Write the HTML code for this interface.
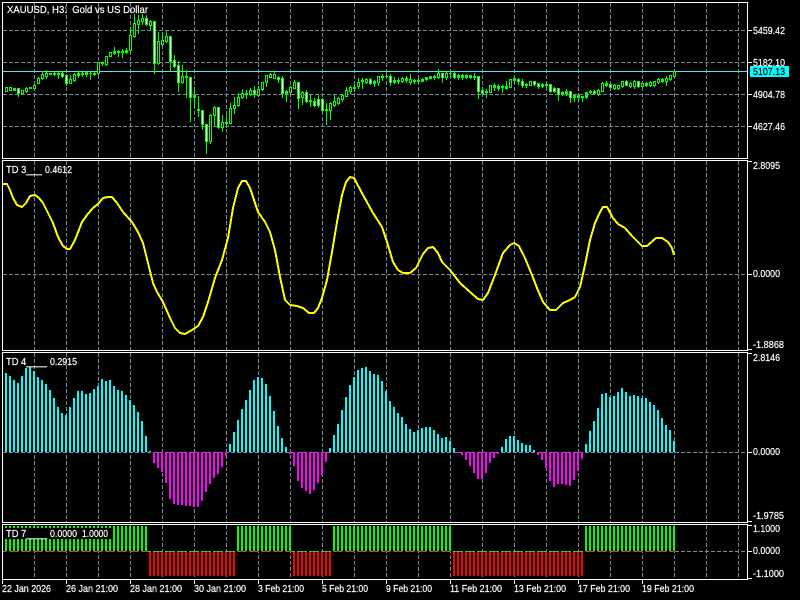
<!DOCTYPE html>
<html><head><meta charset="utf-8"><title>XAUUSD, H3</title>
<style>
html,body{margin:0;padding:0;background:#000;width:800px;height:600px;overflow:hidden}
svg{display:block}
text{font-family:"Liberation Sans",sans-serif;font-size:10.5px;fill:#fff;stroke:#fff;stroke-width:.2px;white-space:pre}
</style></head><body>
<svg width="800" height="600" viewBox="0 0 800 600" shape-rendering="crispEdges" fill="none">
<rect width="800" height="600" fill="#000"/>
<!-- grid -->
<g stroke="#778899" stroke-dasharray="4 2">
<path d="M34.5 3V158M66.5 3V158M98.5 3V158M130.5 3V158M162.5 3V158M194.5 3V158M226.5 3V158M258.5 3V158M290.5 3V158M322.5 3V158M354.5 3V158M386.5 3V158M418.5 3V158M450.5 3V158M482.5 3V158M514.5 3V158M546.5 3V158M578.5 3V158M610.5 3V158M642.5 3V158M674.5 3V158M706.5 3V158M738.5 3V158"/>
<path d="M34.5 161V350M66.5 161V350M98.5 161V350M130.5 161V350M162.5 161V350M194.5 161V350M226.5 161V350M258.5 161V350M290.5 161V350M322.5 161V350M354.5 161V350M386.5 161V350M418.5 161V350M450.5 161V350M482.5 161V350M514.5 161V350M546.5 161V350M578.5 161V350M610.5 161V350M642.5 161V350M674.5 161V350M706.5 161V350M738.5 161V350"/>
<path d="M34.5 353V522M66.5 353V522M98.5 353V522M130.5 353V522M162.5 353V522M194.5 353V522M226.5 353V522M258.5 353V522M290.5 353V522M322.5 353V522M354.5 353V522M386.5 353V522M418.5 353V522M450.5 353V522M482.5 353V522M514.5 353V522M546.5 353V522M578.5 353V522M610.5 353V522M642.5 353V522M674.5 353V522M706.5 353V522M738.5 353V522"/>
<path d="M34.5 525V579M66.5 525V579M98.5 525V579M130.5 525V579M162.5 525V579M194.5 525V579M226.5 525V579M258.5 525V579M290.5 525V579M322.5 525V579M354.5 525V579M386.5 525V579M418.5 525V579M450.5 525V579M482.5 525V579M514.5 525V579M546.5 525V579M578.5 525V579M610.5 525V579M642.5 525V579M674.5 525V579M706.5 525V579M738.5 525V579"/>
<path d="M3 30.5H747M3 62.5H747M3 94.5H747M3 126.5H747M3 274.5H747M3 452.5H747M3 551.5H747"/>
</g>
<!-- price line -->
<path d="M3 71.5H747" stroke="#55e8e8"/>
<!-- candles wicks -->
<path stroke="#00ff00" d="M2.5 90V95M6.5 87V92M10.5 87V91M14.5 88V91M18.5 88V97M22.5 90V94M26.5 87V93M30.5 87V89M34.5 84V89M38.5 77V84M42.5 71V80M46.5 70V79M50.5 73V75M54.5 72V76M58.5 72V79M62.5 71V78M66.5 74V86M70.5 75V84M74.5 73V82M78.5 71V78M82.5 71V77M86.5 71V77M90.5 71V80M94.5 72V76M98.5 62V75M102.5 62V66M106.5 56V66M110.5 52V57M114.5 47V55M118.5 50V57M122.5 49V58M126.5 48V54M130.5 27V53M134.5 14V38M138.5 15V34M142.5 14V25M146.5 15V26M150.5 20V30M154.5 21V74M158.5 32V65M162.5 32V46M166.5 31V43M170.5 36V72M174.5 55V68M178.5 61V92M182.5 65V84M186.5 70V98M190.5 77V122M194.5 87V108M198.5 96V117M202.5 110V130M206.5 124V154M210.5 114V144M214.5 106V126M218.5 107V129M222.5 115V132M226.5 115V128M230.5 103V124M234.5 97V114M238.5 93V107M242.5 89V99M246.5 90V99M250.5 88V96M254.5 86V98M258.5 86V97M262.5 82V91M266.5 75V87M270.5 73V78M274.5 72V79M278.5 76V83M282.5 76V98M286.5 90V102M290.5 86V94M294.5 80V89M298.5 82V109M302.5 91V105M306.5 90V103M310.5 95V107M314.5 98V107M318.5 94V108M322.5 98V112M326.5 103V125M330.5 102V120M334.5 94V107M338.5 97V105M342.5 94V102M346.5 87V97M350.5 86V94M354.5 85V92M358.5 78V89M362.5 78V89M366.5 78V84M370.5 78V85M374.5 80V87M378.5 76V86M382.5 74V81M386.5 73V79M390.5 74V86M394.5 77V84M398.5 78V84M402.5 77V83M406.5 76V83M410.5 74V85M414.5 79V84M418.5 78V83M422.5 78V82M426.5 77V81M430.5 76V79M434.5 75V80M438.5 69V79M442.5 73V83M446.5 72V80M450.5 71V78M454.5 71V79M458.5 74V80M462.5 74V80M466.5 74V79M470.5 75V79M474.5 73V80M478.5 76V99M482.5 87V94M486.5 89V98M490.5 85V93M494.5 83V91M498.5 84V91M502.5 85V93M506.5 81V90M510.5 79V88M514.5 78V83M518.5 78V85M522.5 79V88M526.5 83V88M530.5 81V86M534.5 81V86M538.5 83V89M542.5 83V88M546.5 82V87M550.5 84V93M554.5 87V93M558.5 88V101M562.5 91V96M566.5 89V96M570.5 91V103M574.5 95V102M578.5 94V101M582.5 96V102M586.5 92V99M590.5 90V94M594.5 90V95M598.5 89V96M602.5 82V92M606.5 81V87M610.5 83V89M614.5 84V90M618.5 85V90M622.5 81V88M626.5 80V86M630.5 82V88M634.5 80V89M638.5 81V88M642.5 83V88M646.5 82V87M650.5 81V87M654.5 81V87M658.5 78V84M662.5 78V83M666.5 76V86M670.5 75V81M674.5 71V77"/>
<!-- candle bodies -->
<path stroke="#00ff00" stroke-width="3" d="M6.5 87V92M10.5 87V91M14.5 88V91M18.5 88V94M22.5 90V94M26.5 88V92M30.5 87V89M34.5 85V89M38.5 78V84M42.5 74V79M46.5 73V77M50.5 73V75M54.5 73V75M58.5 73V75M62.5 73V77M66.5 75V84M70.5 79V84M74.5 74V81M78.5 73V76M82.5 73V75M86.5 72V75M90.5 73V74M94.5 73V75M98.5 62V74M102.5 62V64M106.5 56V65M110.5 52V57M114.5 51V54M118.5 51V53M122.5 51V53M126.5 50V53M130.5 35V51M134.5 23V37M138.5 20V25M142.5 18V22M146.5 18V25M150.5 21V26M154.5 21V64M158.5 41V64M162.5 40V45M166.5 36V42M170.5 36V62M174.5 60V67M178.5 65V83M182.5 76V83M186.5 76V78M190.5 77V98M194.5 95V98M198.5 109V111M202.5 110V125M206.5 124V142M210.5 115V142M214.5 107V116M218.5 107V128M222.5 122V128M226.5 122V124M230.5 108V124M234.5 105V109M238.5 97V106M242.5 93V98M246.5 93V95M250.5 90V95M254.5 90V95M258.5 89V96M262.5 82V90M266.5 75V83M270.5 74V78M274.5 74V79M278.5 77V80M282.5 78V94M286.5 91V94M290.5 87V93M294.5 82V89M298.5 82V99M302.5 92V98M306.5 92V102M310.5 100V102M314.5 101V106M318.5 99V106M322.5 99V111M326.5 109V111M330.5 103V111M334.5 101V106M338.5 98V104M342.5 95V100M346.5 90V97M350.5 87V92M354.5 87V89M358.5 82V87M362.5 80V82M366.5 79V83M370.5 79V84M374.5 81V84M378.5 76V83M382.5 76V78M386.5 76V77M390.5 76V83M394.5 80V83M398.5 80V82M402.5 78V82M406.5 78V81M410.5 79V83M414.5 80V82M418.5 80V82M422.5 79V82M426.5 77V80M430.5 76V79M434.5 76V78M438.5 73V78M442.5 73V78M446.5 73V78M450.5 73V74M454.5 73V78M458.5 75V78M462.5 75V78M466.5 75V78M470.5 75V78M474.5 76V78M478.5 76V92M482.5 90V94M486.5 91V93M490.5 85V93M494.5 85V88M498.5 86V89M502.5 86V88M506.5 86V89M510.5 79V88M514.5 78V81M518.5 79V82M522.5 81V86M526.5 84V86M530.5 81V86M534.5 81V85M538.5 83V87M542.5 84V87M546.5 84V86M550.5 84V92M554.5 88V92M558.5 88V95M562.5 92V95M566.5 91V94M570.5 91V98M574.5 95V98M578.5 95V98M582.5 96V98M586.5 92V98M590.5 91V93M594.5 91V94M598.5 90V95M602.5 83V92M606.5 83V86M610.5 84V88M614.5 85V89M618.5 85V89M622.5 81V87M626.5 81V86M630.5 83V87M634.5 81V87M638.5 81V87M642.5 83V87M646.5 83V86M650.5 82V86M654.5 81V86M658.5 79V83M662.5 79V82M666.5 78V82M670.5 75V80M674.5 71V77"/>
<!-- bearish interiors -->
<path stroke="#ffffff" d="M18.5 89V93M62.5 74V76M66.5 76V83M146.5 19V24M154.5 22V63M170.5 37V61M174.5 61V66M178.5 66V82M190.5 78V97M202.5 111V124M206.5 125V141M218.5 108V127M254.5 91V94M278.5 78V79M282.5 79V93M298.5 83V98M306.5 93V101M314.5 102V105M318.5 100V105M322.5 100V110M370.5 80V83M390.5 77V82M442.5 74V77M454.5 74V77M478.5 77V91M482.5 91V93M518.5 80V81M522.5 82V85M534.5 82V84M538.5 84V86M550.5 85V91M554.5 89V91M558.5 89V94M570.5 92V97M594.5 92V93M610.5 85V87M626.5 82V85M638.5 82V86"/>
<!-- bullish interiors -->
<path stroke="#000000" d="M6.5 88V91M10.5 88V90M22.5 91V93M26.5 89V91M34.5 86V88M38.5 79V83M42.5 75V78M46.5 74V76M70.5 80V83M74.5 75V80M98.5 63V73M106.5 57V64M110.5 53V56M130.5 36V50M134.5 24V36M138.5 21V24M142.5 19V21M150.5 22V25M158.5 42V63M162.5 41V44M166.5 37V41M182.5 77V82M210.5 116V141M214.5 108V115M222.5 123V127M230.5 109V123M234.5 106V108M238.5 98V105M242.5 94V97M250.5 91V94M258.5 90V95M262.5 83V89M266.5 76V82M270.5 75V77M274.5 75V78M290.5 88V92M294.5 83V88M302.5 93V97M330.5 104V110M334.5 102V105M338.5 99V103M342.5 96V99M346.5 91V96M350.5 88V91M358.5 83V86M366.5 80V82M378.5 77V82M402.5 79V81M410.5 80V82M438.5 74V77M446.5 74V77M490.5 86V92M510.5 80V87M530.5 82V85M598.5 91V94M602.5 84V91M614.5 86V88M618.5 86V88M622.5 82V86M630.5 84V86M634.5 82V86M642.5 84V86M650.5 83V85M654.5 82V85M658.5 80V82M666.5 79V81M670.5 76V79M674.5 72V76"/>
<!-- yellow line -->
<path stroke="#ffff00" stroke-width="2" stroke-linejoin="round" d="M3 184L7 184L10 190L13 198L17 205L22 207L26 203L30 196L35 195L39 198L43 203L48 213L53 223L58 237L63 246L67 249L70 249L75 240L82 222L87 215L93 208L98 204L103 198L108 197L112 197L117 203L123 212L132 222L138 232L143 243L148 263L153 283L157 292L163 302L170 318L175 328L180 333L185 334L192 330L198 326L203 317L208 302L215 278L222 260L228 238L233 208L238 188L242 181L246 181L250 188L258 212L265 222L270 232L275 250L280 277L285 300L290 305L297 306L303 308L309 313L314 313L318 308L322 298L327 280L332 252L337 222L342 195L346 182L350 177L354 178L363 195L373 213L382 227L387 242L393 262L398 270L403 273L410 273L416 268L423 254L428 248L433 247L438 253L442 262L450 270L460 283L470 292L478 299L483 300L488 293L495 275L503 253L510 245L514 243L519 246L525 258L532 275L537 288L543 302L550 310L556 310L563 303L570 300L575 297L580 287L585 265L590 240L595 223L600 212L603 207L607 207L613 218L618 224L625 228L632 236L642 246L647 246L656 238L662 238L668 242L672 248L674 255"/>
<!-- TD4 histogram -->
<path stroke="#00ffff" stroke-width="2" d="M6 452V373M10 452V376M14 452V380M18 452V383M22 452V376M26 452V368M30 452V367M34 452V371M38 452V377M42 452V380M46 452V384M50 452V390M54 452V398M58 452V407M62 452V413M66 452V415M70 452V407M74 452V398M78 452V391M82 452V391M86 452V394M90 452V393M94 452V389M98 452V386M102 452V379M106 452V381M110 452V380M114 452V386M118 452V390M122 452V391M126 452V395M130 452V400M134 452V405M138 452V412M142 452V421M146 452V436M150 452V451M230 452V444M234 452V432M238 452V420M242 452V409M246 452V400M250 452V390M254 452V380M258 452V377M262 452V378M266 452V384M270 452V396M274 452V411M278 452V426M282 452V438M286 452V447M330 452V448M334 452V435M338 452V424M342 452V410M346 452V397M350 452V385M354 452V377M358 452V370M362 452V368M366 452V367M370 452V371M374 452V374M378 452V375M382 452V381M386 452V391M390 452V401M394 452V407M398 452V413M402 452V417M406 452V424M410 452V429M414 452V432M418 452V430M422 452V428M426 452V427M430 452V427M434 452V430M438 452V434M442 452V438M446 452V437M450 452V441M454 452V448M502 452V447M506 452V439M510 452V436M514 452V436M518 452V440M522 452V443M526 452V445M530 452V445M534 452V450M586 452V444M590 452V431M594 452V421M598 452V408M602 452V394M606 452V393M610 452V397M614 452V396M618 452V392M622 452V388M626 452V392M630 452V396M634 452V395M638 452V396M642 452V398M646 452V398M650 452V402M654 452V405M658 452V410M662 452V418M666 452V425M670 452V430M674 452V441"/>
<path stroke="#ff00ff" stroke-width="2" d="M154 452V463M158 452V468M162 452V472M166 452V483M170 452V499M174 452V504M178 452V505M182 452V505M186 452V506M190 452V506M194 452V507M198 452V507M202 452V501M206 452V492M210 452V484M214 452V478M218 452V474M222 452V467M226 452V456M290 452V454M294 452V466M298 452V481M302 452V488M306 452V491M310 452V494M314 452V490M318 452V483M322 452V475M326 452V462M458 452V453M462 452V455M466 452V460M470 452V466M474 452V473M478 452V479M482 452V479M486 452V473M490 452V463M494 452V458M498 452V454M538 452V455M542 452V460M546 452V468M550 452V481M554 452V487M558 452V484M562 452V484M566 452V485M570 452V486M574 452V480M578 452V471M582 452V459"/>
<!-- TD7 bars -->
<g stroke-dasharray="2 2">
<path stroke="#00ff00" stroke-width="25" d="M5 538.5H147M237 538.5H291M333 538.5H451M585 538.5H675"/>
<path stroke="#ff0000" d="M5 551.5H147M237 551.5H291M333 551.5H451M585 551.5H675"/>
<path stroke="#ff0000" stroke-width="24" d="M149 564H235M293 564H331M453 564H583"/>
<path stroke="#00ff00" d="M149 551.5H235M293 551.5H331M453 551.5H583"/>
</g>
<rect x="5" y="528" width="107" height="11" fill="#000"/>
<!-- frames -->
<g stroke="#fff">
<rect x="2.5" y="2.5" width="745" height="156"/>
<rect x="2.5" y="160.5" width="745" height="190"/>
<rect x="2.5" y="352.5" width="745" height="170"/>
<rect x="2.5" y="524.5" width="745" height="55"/>
<path d="M748 30.5H752M748 62.5H752M748 94.5H752M748 126.5H752M748 161.5H752M748 274.5H752M748 349.5H752M748 353.5H752M748 452.5H752M748 521.5H752M748 525.5H752M748 551.5H752M748 578.5H752"/>
<path d="M2.5 580V584M66.5 580V584M130.5 580V584M194.5 580V584M258.5 580V584M322.5 580V584M386.5 580V584M450.5 580V584M514.5 580V584M578.5 580V584M642.5 580V584"/>
</g>
<rect x="750" y="66" width="39" height="11" fill="#00ffff"/>
<!-- labels -->
<g shape-rendering="auto">
<text x="7" y="13" textLength="141" lengthAdjust="spacingAndGlyphs">XAUUSD, H3:  Gold vs US Dollar</text>
<text x="753" y="34" textLength="32" lengthAdjust="spacingAndGlyphs">5459.42</text>
<text x="753" y="66" textLength="32" lengthAdjust="spacingAndGlyphs">5182.10</text>
<text x="753" y="75" textLength="32" lengthAdjust="spacingAndGlyphs" style="fill:#000;stroke:#000">5107.13</text>
<text x="753" y="98" textLength="32" lengthAdjust="spacingAndGlyphs">4904.78</text>
<text x="753" y="130" textLength="32" lengthAdjust="spacingAndGlyphs">4627.46</text>
<text x="6" y="173" textLength="36" lengthAdjust="spacingAndGlyphs">TD 3___</text>
<text x="45" y="173" textLength="27" lengthAdjust="spacingAndGlyphs">0.4612</text>
<text x="753" y="169" textLength="27" lengthAdjust="spacingAndGlyphs">2.8095</text>
<text x="753" y="277" textLength="27" lengthAdjust="spacingAndGlyphs">0.0000</text>
<text x="753" y="348" textLength="31" lengthAdjust="spacingAndGlyphs">-1.8868</text>
<text x="6" y="365" textLength="41" lengthAdjust="spacingAndGlyphs">TD 4____</text>
<text x="50" y="365" textLength="27" lengthAdjust="spacingAndGlyphs">0.2915</text>
<text x="753" y="361" textLength="27" lengthAdjust="spacingAndGlyphs">2.8146</text>
<text x="753" y="455" textLength="27" lengthAdjust="spacingAndGlyphs">0.0000</text>
<text x="753" y="519" textLength="31" lengthAdjust="spacingAndGlyphs">-1.9785</text>
<text x="6" y="537" textLength="41" lengthAdjust="spacingAndGlyphs">TD 7____</text>
<text x="50" y="537" textLength="27" lengthAdjust="spacingAndGlyphs">0.0000</text>
<text x="82" y="537" textLength="26" lengthAdjust="spacingAndGlyphs">1.0000</text>
<text x="753" y="532" textLength="27" lengthAdjust="spacingAndGlyphs">1.1000</text>
<text x="753" y="554" textLength="27" lengthAdjust="spacingAndGlyphs">0.0000</text>
<text x="753" y="577" textLength="31" lengthAdjust="spacingAndGlyphs">-1.1000</text>
<text x="2" y="592" textLength="49" lengthAdjust="spacingAndGlyphs">22 Jan 2026</text>
<text x="66" y="592" textLength="52" lengthAdjust="spacingAndGlyphs">26 Jan 21:00</text>
<text x="130" y="592" textLength="52" lengthAdjust="spacingAndGlyphs">28 Jan 21:00</text>
<text x="194" y="592" textLength="52" lengthAdjust="spacingAndGlyphs">30 Jan 21:00</text>
<text x="258" y="592" textLength="46" lengthAdjust="spacingAndGlyphs">3 Feb 21:00</text>
<text x="322" y="592" textLength="46" lengthAdjust="spacingAndGlyphs">5 Feb 21:00</text>
<text x="386" y="592" textLength="46" lengthAdjust="spacingAndGlyphs">9 Feb 21:00</text>
<text x="450" y="592" textLength="52" lengthAdjust="spacingAndGlyphs">11 Feb 21:00</text>
<text x="514" y="592" textLength="52" lengthAdjust="spacingAndGlyphs">13 Feb 21:00</text>
<text x="578" y="592" textLength="52" lengthAdjust="spacingAndGlyphs">17 Feb 21:00</text>
<text x="642" y="592" textLength="52" lengthAdjust="spacingAndGlyphs">19 Feb 21:00</text>
</g>
</svg>
</body></html>
